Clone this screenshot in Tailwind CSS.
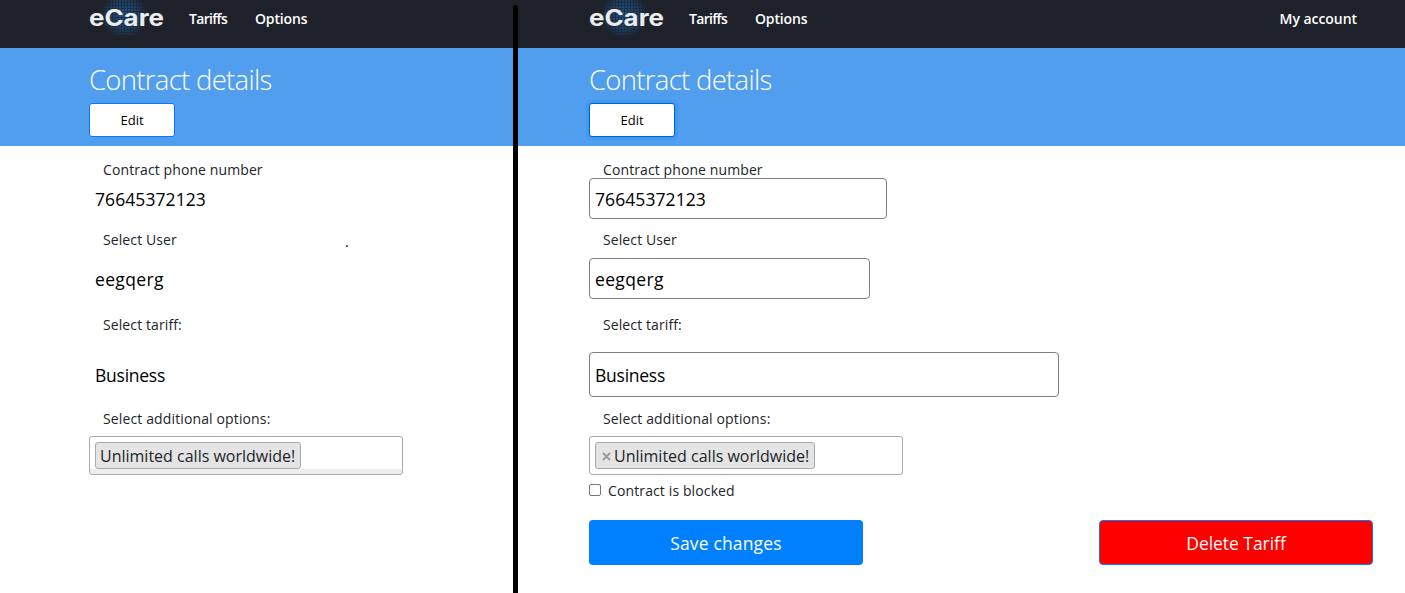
<!DOCTYPE html>
<html lang="en">
<head>
<meta charset="utf-8">
<title>eCare – Contract details</title>
<script src="https://cdn.jsdelivr.net/npm/@tailwindcss/browser@4"></script>
</head>
<body class="h-[593px] w-[1405px] overflow-hidden bg-white font-['Open_Sans','Noto_Sans',sans-serif] whitespace-nowrap text-[#212529]">
<svg class="absolute h-0 w-0" aria-hidden="true">
  <defs>
    <pattern id="dots" width="3" height="3" patternUnits="userSpaceOnUse"><rect width="3" height="3" fill="#1c4d80" fill-opacity=".55"/><rect width="2" height="2" fill="#1d5f9f"/></pattern>
    <radialGradient id="fade"><stop offset="0" stop-color="#fff" stop-opacity=".85"/><stop offset=".6" stop-color="#fff" stop-opacity=".5"/><stop offset="1" stop-color="#fff" stop-opacity="0"/></radialGradient>
    <mask id="glow"><circle cx="35" cy="15" r="24" fill="url(#fade)"/></mask>
  </defs>
</svg>
<div class="relative flex h-full">

  <section class="h-full w-[515px] shrink-0 overflow-hidden">
    <header class="flex h-12 bg-[#1e2129] pl-[89px] text-[14px] leading-[38px] font-semibold text-white">
      <div class="relative w-[100px]">
        <svg class="absolute top-0 left-0" width="76" height="40"><rect width="76" height="40" fill="url(#dots)" mask="url(#glow)"/><text x="0" y="25.5" textLength="75" lengthAdjust="spacingAndGlyphs" font-family="Inter" font-weight="700" font-size="23" fill="#ececec">eCare</text></svg>
      </div>
      <a class="w-[66px] tracking-[-0.7px]">Tariffs</a>
      <a class="tracking-[-0.15px]">Options</a>
    </header>
    <div class="h-[98px] bg-[#519dee] pl-[89px]">
      <h1 class="h-[55px] pt-[12px] text-[27.5px] leading-[40px] font-light tracking-[-0.7px] text-white">Contract details</h1>
      <button class="block h-[34px] w-[86px] rounded-[3px] border border-[#007bff] bg-white pt-px text-[13px] text-black">Edit</button>
    </div>
    <main class="flex flex-col pl-[89px]">
      <label class="h-8 pl-[14px] text-[14px] leading-[48px] tracking-[0.1px]">Contract phone number</label>
      <div class="flex h-[41px] w-[298px] items-center pt-[2px] pl-[6px] text-[17.5px] tracking-[0.08px] text-black">76645372123</div>
      <div class="flex h-[39px] pl-[14px] text-[14px] leading-[42px] tracking-[0.1px]"><label class="w-[242px]">Select User</label><span class="leading-[46px] text-black">.</span></div>
      <div class="flex h-[41px] w-[281px] items-center pt-[2px] pl-[6px] text-[17.5px] tracking-[0.35px] text-black">eegqerg</div>
      <label class="h-[53px] pl-[14px] text-[14px] leading-[52px] tracking-[0.1px]">Select tariff:</label>
      <div class="flex h-[45px] w-[470px] items-center pt-[2px] pl-[6px] text-[17.5px] tracking-[-0.25px] text-black">Business</div>
      <label class="h-[39px] pl-[14px] text-[14px] leading-[44px] tracking-[0.13px]">Select additional options:</label>
      <div class="flex h-[39px] w-[314px] rounded-[3px] border border-[#aaa] bg-linear-to-b from-white from-[32px] to-[#eee] to-[32px] pt-[5px] pl-[5px]">
        <span class="flex h-[27px] w-[206px] items-center rounded-[3px] border border-[#aaa] bg-[#e4e4e4] pl-[4px] text-[16px]">Unlimited calls worldwide!</span>
      </div>
    </main>
  </section>

  <section class="h-full flex-1 overflow-hidden">
    <header class="flex h-12 bg-[#1e2129] pr-12 pl-[74px] text-[14px] leading-[38px] font-semibold text-white">
      <div class="relative w-[100px]">
        <svg class="absolute top-0 left-0" width="76" height="40"><rect width="76" height="40" fill="url(#dots)" mask="url(#glow)"/><text x="0" y="25.5" textLength="75" lengthAdjust="spacingAndGlyphs" font-family="Inter" font-weight="700" font-size="23" fill="#ececec">eCare</text></svg>
      </div>
      <a class="w-[66px] tracking-[-0.7px]">Tariffs</a>
      <a class="tracking-[-0.15px]">Options</a>
      <a class="ml-auto tracking-[-0.05px]">My account</a>
    </header>
    <div class="h-[98px] bg-[#519dee] pl-[74px]">
      <h1 class="h-[55px] pt-[12px] text-[27.5px] leading-[40px] font-light tracking-[-0.7px] text-white">Contract details</h1>
      <button class="block h-[34px] w-[86px] rounded-[3px] border border-[#0062cc] bg-white pt-px text-[13px] text-black ring-3 ring-[#3f97f6]">Edit</button>
    </div>
    <main class="flex flex-col pl-[74px]">
      <label class="h-8 pl-[14px] text-[14px] leading-[48px] tracking-[0.1px]">Contract phone number</label>
      <div class="flex h-[41px] w-[298px] items-center rounded-[4px] border border-[#808080] bg-white pt-[2px] pl-[5px] text-[17.5px] tracking-[0.08px] text-black">76645372123</div>
      <label class="h-[39px] pl-[14px] text-[14px] leading-[42px] tracking-[0.1px]">Select User</label>
      <div class="flex h-[41px] w-[281px] items-center rounded-[4px] border border-[#808080] pt-[2px] pl-[5px] text-[17.5px] tracking-[0.35px] text-black">eegqerg</div>
      <label class="h-[53px] pl-[14px] text-[14px] leading-[52px] tracking-[0.1px]">Select tariff:</label>
      <div class="flex h-[45px] w-[470px] items-center rounded-[4px] border border-[#808080] pt-[2px] pl-[5px] text-[17.5px] tracking-[-0.25px] text-black">Business</div>
      <label class="h-[39px] pl-[14px] text-[14px] leading-[44px] tracking-[0.13px]">Select additional options:</label>
      <div class="flex h-[39px] w-[314px] rounded-[3px] border border-[#aaa] pt-[5px] pl-[5px]">
        <span class="flex h-[27px] w-[220px] items-center rounded-[3px] border border-[#aaa] bg-[#e4e4e4] pl-[6px] text-[16px]"><svg class="mt-[2px] mr-[3px]" width="9" height="9" viewBox="0 0 9 9" stroke="#999" stroke-width="1.8"><path d="M1 1l7 7M8 1L1 8"/></svg>Unlimited calls worldwide!</span>
      </div>
      <label class="flex h-[45px] text-[14px] leading-[32px] tracking-[0.12px]"><span class="mt-[9px] mr-[7px] h-[12px] w-[12px] rounded-[2px] border border-[#767676] bg-white"></span>Contract is blocked</label>
      <div class="flex justify-between pr-8 text-[17.5px] text-white">
        <button class="h-[45px] w-[274px] rounded-[4px] bg-[#0080ff] pt-[2px] tracking-[0.15px]">Save changes</button>
        <button class="h-[45px] w-[274px] rounded-[4px] border border-[#007bff] bg-[#ff0000] pt-[2px] tracking-[-0.05px]">Delete Tariff</button>
      </div>
    </main>
  </section>

  <div class="absolute top-[5px] left-[513px] h-[600px] w-[5px] rounded-full bg-black"></div>
</div>
</body>
</html>
